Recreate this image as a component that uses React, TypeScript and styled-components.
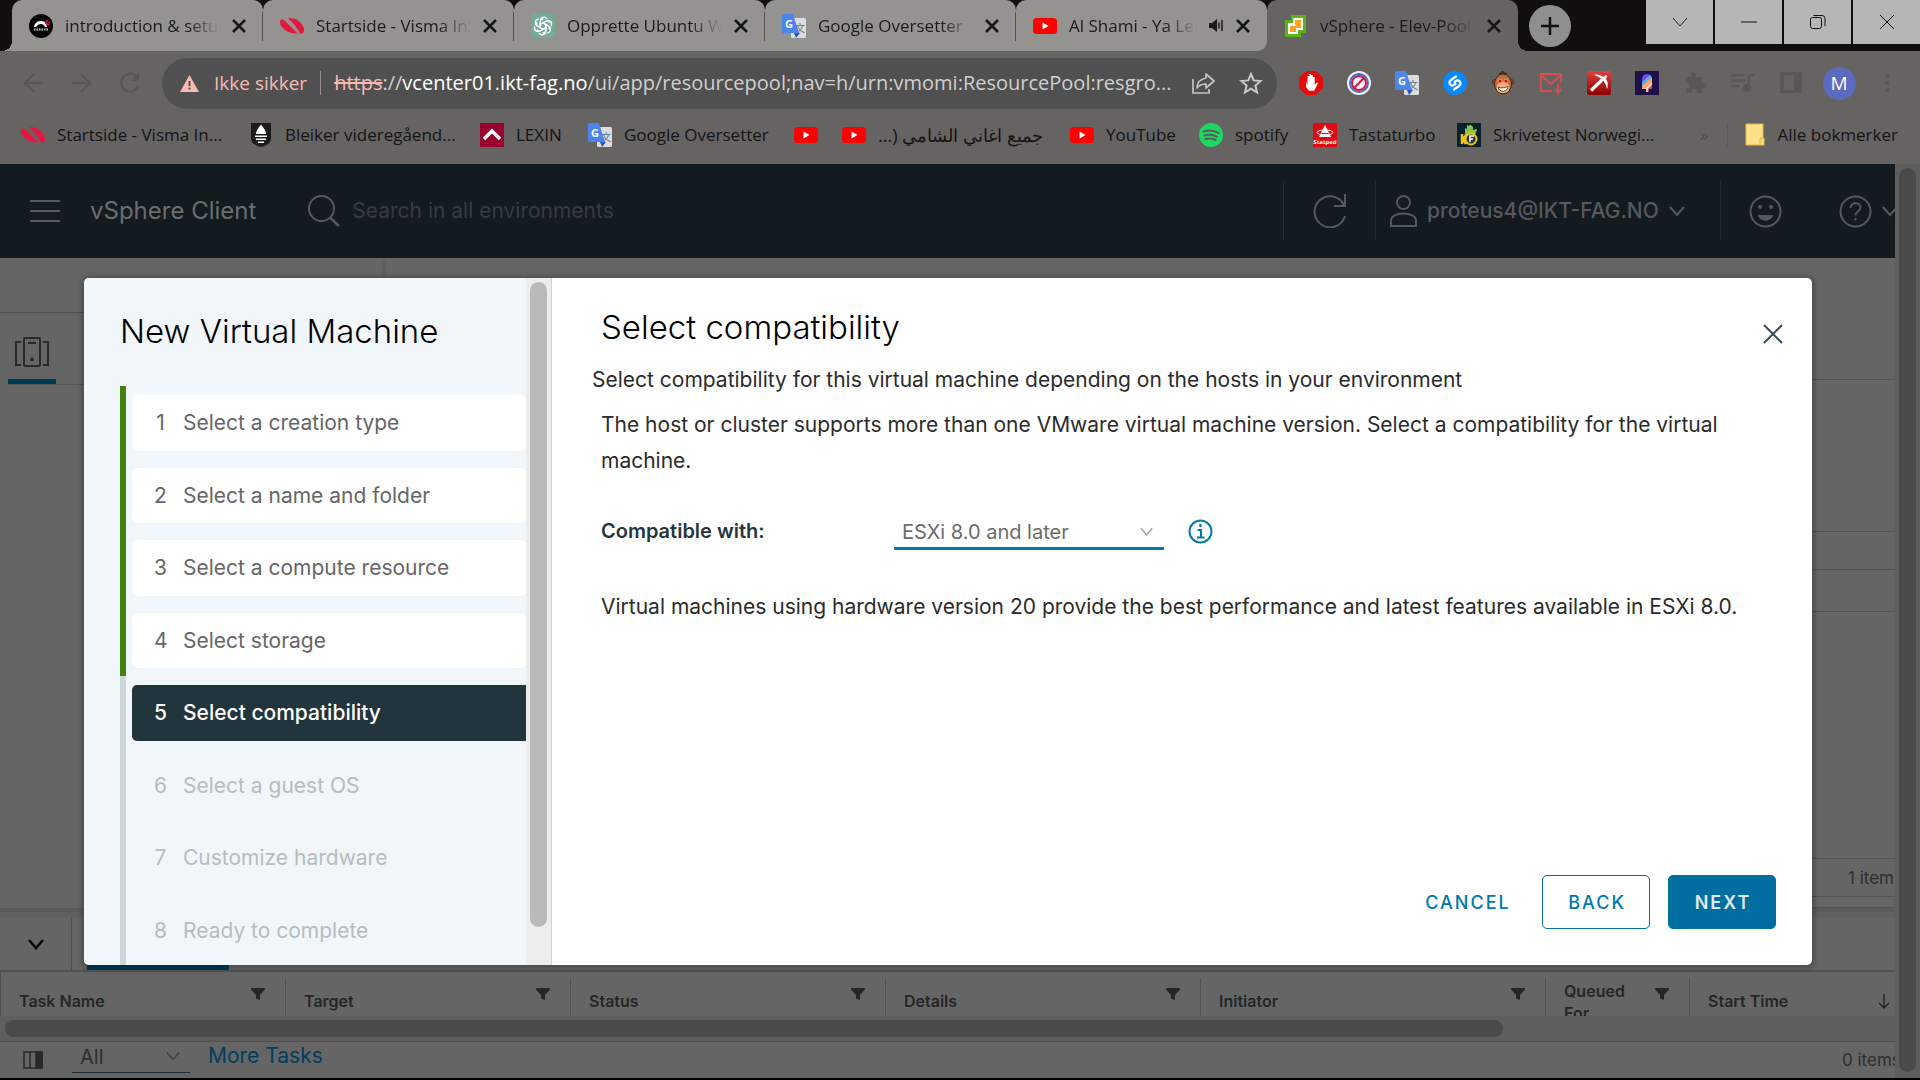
import React from "react";
import styled, { createGlobalStyle, css } from "styled-components";

const ui = '"Open Sans", "Noto Sans", sans-serif';
const city = 'Inter, "Noto Sans", sans-serif';

const Global = createGlobalStyle`
  *, *::before, *::after { box-sizing: border-box; }
  html, body { margin: 0; background: #000; }
  button, select, input { font: inherit; color: inherit; margin: 0; }
  button { padding: 0; border: 0; background: none; cursor: pointer; }
  a { color: inherit; text-decoration: none; }
  svg { display: block; flex: none; }
`;

const Page = styled.div`
  display: flex;
  flex-direction: column;
  min-height: 100vh;
  overflow: hidden;
  border-bottom: 2px solid #000;
  background: #656565;
  font-family: ${city};
`;

/* ---------- browser chrome ---------- */

const TabStrip = styled.header`
  display: flex;
  height: 51px;
  padding-left: 12px;
  background: #100f0c;
  font: 400 17px/24px ${ui};
`;

const Tab = styled.div<{ $active?: boolean; $first?: boolean; $divided?: boolean }>`
  position: relative;
  display: flex;
  align-items: center;
  gap: 12px;
  flex: 0 1 251px;
  min-width: 0;
  padding: 0 17px;
  border-radius: 10px 10px 0 0;
  background: ${(p) => (p.$active ? "#666363" : "#949390")};
  color: #1b1b1b;

  ${(p) =>
    p.$divided &&
    css`
      &::after {
        content: "";
        position: absolute;
        right: 0;
        top: 12px;
        width: 1px;
        height: 29px;
        background: #52514f;
      }
    `}

  ${(p) =>
    (p.$active || p.$first) &&
    css`
      &::before {
        content: "";
        position: absolute;
        left: -10px;
        bottom: 0;
        width: 10px;
        height: 10px;
        background: radial-gradient(circle at 0 0, transparent 10px, ${p.$active ? "#666363" : "#949390"} 10px);
      }
    `}

  ${(p) =>
    p.$active &&
    css`
      &::after {
        content: "";
        position: absolute;
        right: -10px;
        bottom: 0;
        width: 10px;
        height: 10px;
        background: radial-gradient(circle at 100% 0, transparent 10px, #666363 10px);
      }
    `}
`;

const TabTitle = styled.span`
  flex: 1;
  min-width: 0;
  overflow: hidden;
  white-space: nowrap;
  mask-image: linear-gradient(to right, #000 calc(100% - 32px), transparent);
`;

const TabClose = styled.button`
  display: grid;
  place-items: center;
  width: 14px;
  height: 24px;
`;

const NewTab = styled.button`
  align-self: center;
  display: grid;
  place-items: center;
  width: 42px;
  height: 42px;
  margin-left: 11px;
  border-radius: 50%;
  background: #8f8f8c;
`;

const WindowControls = styled.div`
  display: flex;
  gap: 2px;
  height: 44px;
  margin-left: auto;
`;

const WindowButton = styled.button`
  display: grid;
  place-items: center;
  width: 67px;
  background: #b6b6b6;
`;

const Toolbar = styled.div`
  display: flex;
  align-items: center;
  height: 64px;
  padding: 0 9px 0 22px;
  background: #666363;
  font: 400 19px/24px ${ui};
`;

const NavButtons = styled.div`
  display: flex;
  gap: 24px;
  width: 140px;
`;

const AddressBar = styled.div`
  flex: 1;
  display: flex;
  align-items: center;
  min-width: 0;
  height: 51px;
  padding: 0 14px 0 18px;
  border-radius: 26px;
  background: #505050;
  color: #cfcfcf;
`;

const Insecure = styled.span`
  padding: 0 13px 0 15px;
  color: #f6bab2;
  white-space: nowrap;
`;

const AddressRule = styled.span`
  width: 1px;
  height: 24px;
  margin-right: 13px;
  background: #9a8f8d;
`;

const Address = styled.span`
  flex: 1;
  min-width: 0;
  overflow: hidden;
  text-overflow: ellipsis;
  white-space: nowrap;
  font-size: 20px;
  line-height: 28px;

  s { color: #f6bab2; }
  b { font-weight: 400; color: #fff; }
`;

const AddressActions = styled.div`
  display: flex;
  gap: 24px;
  padding-left: 12px;
`;

const Extensions = styled.div`
  display: flex;
  align-items: center;
  padding-left: 10px;
`;

const Extension = styled.button`
  display: grid;
  place-items: center;
  width: 48px;
  height: 40px;
`;

const Avatar = styled.span`
  display: grid;
  place-items: center;
  width: 33px;
  height: 33px;
  border-radius: 50%;
  background: #5c6bc0;
  color: #fff;
  font: 400 19px/24px ${ui};
`;

const BookmarkBar = styled.nav`
  display: flex;
  align-items: center;
  height: 49px;
  padding: 0 22px 9px 21px;
  background: #666363;
  color: #141414;
  font: 400 17px/24px ${ui};
`;

const Bookmark = styled.a<{ $width: number }>`
  display: flex;
  align-items: center;
  gap: 12px;
  flex: 0 0 ${(p) => p.$width}px;
  min-width: 0;
  padding-right: 20px;
  white-space: nowrap;

  [dir="rtl"] { font-size: 18px; }
`;

const More = styled.button`
  color: #4b4949;
`;

const AllBookmarks = styled.a`
  display: flex;
  align-items: center;
  gap: 12px;
  margin-left: auto;
  padding-left: 17px;
  border-left: 1px solid #5a5757;
  white-space: nowrap;
`;

/* ---------- vSphere page ---------- */

const Viewport = styled.div`
  flex: 1;
  display: flex;
  min-height: 0;
`;

const ClientArea = styled.div`
  flex: 1;
  display: flex;
  flex-direction: column;
  min-width: 0;
`;

const ScrollTrack = styled.div`
  display: flex;
  width: 25px;
  padding: 4px;
  background: #5e5e5e;
`;

const ScrollThumb = styled.div`
  flex: 1;
  margin-bottom: 2px;
  border-radius: 9px;
  background: #4a4a4a;
`;

const ClientHeader = styled.header`
  display: flex;
  align-items: center;
  height: 94px;
  padding-left: 30px;
  overflow: hidden;
  background: #131a20;
  color: #55595d;
`;

const Brand = styled.h1`
  margin: 0 52px 0 30px;
  color: #6a6e71;
  font: 400 24px/30px ${city};
  white-space: nowrap;
`;

const SearchBox = styled.label`
  flex: 1;
  display: flex;
  align-items: center;
  gap: 12px;
  min-width: 0;

  input {
    flex: 1;
    min-width: 0;
    padding: 0;
    border: 0;
    outline: 0;
    background: none;
    font: 400 21px/28px ${city};
  }
  input::placeholder { color: #363c41; opacity: 1; }
`;

const HeaderCell = styled.div<{ $width: number; $rule?: boolean }>`
  display: flex;
  align-items: center;
  flex: 0 0 ${(p) => p.$width}px;
  height: 60px;
  border-left: 1px solid ${(p) => (p.$rule ? "#24292e" : "transparent")};
  overflow: hidden;
  font: 500 21px/28px ${city};
  white-space: nowrap;
`;

const HeaderButton = styled.button<{ $pad: number }>`
  display: flex;
  align-items: center;
  gap: 10px;
  padding-left: ${(p) => p.$pad}px;
`;

const Workspace = styled.div`
  position: relative;
  flex: 1;
  display: flex;
  flex-direction: column;
`;

const Inventory = styled.div`
  flex: 1;
  display: flex;
`;

const TreePane = styled.aside`
  width: 386px;
  border-right: 4px solid #5e5e5e;
`;

const TreeHead = styled.div`
  height: 55px;
  border-bottom: 1px solid #505050;
`;

const TreeTabs = styled.div`
  display: flex;
  height: 72px;
  margin-left: 8px;
  border-bottom: 1px solid #4f5558;
`;

const TreeTab = styled.button`
  display: grid;
  place-items: center;
  width: 48px;
  padding-top: 12px;
  border-bottom: 5px solid #003a54;
`;

const DetailPane = styled.section`
  flex: 1;
  display: flex;
  flex-direction: column;
`;

const Band = styled.div<{ $height?: number }>`
  display: flex;
  align-items: center;
  justify-content: flex-end;
  ${(p) => (p.$height ? `height: ${p.$height}px;` : "flex: 1;")}
  padding-right: 1px;
  border-bottom: 1px solid #505252;
  color: #2e2e2e;
  font-size: 17px;
`;

const Splitter = styled.div`
  height: 9px;
  border-top: 4px solid #5b5b5b;
  background: #606060;
`;

const TasksBar = styled.div`
  display: flex;
  height: 55px;
  border-bottom: 2px solid #4d5353;
`;

const Collapse = styled.button`
  display: grid;
  place-items: center;
  width: 72px;
  border-right: 1px solid #505050;
`;

const ActiveTask = styled.div`
  width: 142px;
  margin-left: 15px;
  border-bottom: 5px solid #003a54;
`;

const TableClip = styled.div`
  height: 44px;
  overflow: hidden;
  border-left: 1px solid #505050;
`;

const TaskTable = styled.table`
  width: 100%;
  border-collapse: collapse;
  table-layout: fixed;

  th { padding: 6px 0 0; vertical-align: top; text-align: left; }
`;

const HeadCell = styled.div<{ $wrap?: boolean; $last?: boolean }>`
  display: flex;
  align-items: ${(p) => (p.$wrap ? "flex-start" : "center")};
  justify-content: space-between;
  gap: 24px;
  height: 38px;
  padding: ${(p) => (p.$wrap ? "2px" : "8px")} ${(p) => (p.$last ? 4 : 20)}px 0 18px;
  border-right: 1px solid ${(p) => (p.$last ? "transparent" : "#525252")};
  color: #262626;
  font: 600 16px/${(p) => (p.$wrap ? 22 : 24)}px ${city};

  svg { align-self: ${(p) => (p.$last ? "center" : "flex-start")}; margin-top: ${(p) => (p.$wrap ? 8 : p.$last ? 0 : 2)}px; }
`;

const HScroll = styled.div`
  height: 26px;
  padding: 4px 5px;
  border-bottom: 1px solid #505050;
  background: #5e5e5e;
`;

const HThumb = styled.div`
  width: calc(100% - 387px);
  height: 17px;
  border-radius: 9px;
  background: #4a4a4a;
`;

const TasksFooter = styled.footer`
  display: flex;
  align-items: center;
  height: 36px;
  padding-left: 23px;
  overflow: hidden;
  color: #2e2e2e;
  font-size: 21px;
  line-height: 26px;
`;

const SelectWrap = styled.span<{ $width: number; $height: number; $line: string }>`
  display: grid;
  grid-template-columns: 1fr 24px;
  align-items: center;
  width: ${(p) => p.$width}px;
  height: ${(p) => p.$height}px;
  border-bottom: ${(p) => p.$line};
  font-size: 20px;

  select {
    grid-area: 1 / 1 / 2 / 3;
    width: 100%;
    padding: 2px 24px 0 8px;
    border: 0;
    outline: 0;
    appearance: none;
    background: none;
  }
  svg { grid-area: 1 / 2; pointer-events: none; }
`;

const MoreTasks = styled.a`
  flex: 1;
  margin: 0 0 8px 18px;
  color: #003f5c;
`;

const FooterSelect = styled.div`
  margin: 0 0 8px 29px;
`;

const Count = styled.span`
  width: 53px;
  font-size: 17px;
  white-space: nowrap;
`;

/* ---------- wizard ---------- */

const Overlay = styled.div`
  position: absolute;
  inset: 20px 83px 113px 84px;
  display: flex;
`;

const Wizard = styled.section`
  flex: 1;
  display: flex;
  min-width: 0;
  overflow: hidden;
  border-radius: 5px;
  background: #fff;
  box-shadow: 0 1px 4px 3px rgba(0, 0, 0, 0.22);
`;

const Side = styled.div`
  display: flex;
  width: 468px;
  border-right: 1px solid #ccd4d8;
  background: #f0f6f9;
`;

const SideContent = styled.div`
  flex: 1;
  padding-left: 36px;
`;

const SideTitle = styled.h2`
  margin: 0;
  padding: 33px 0 35px;
  color: #000;
  font: 300 33px/40px ${city};
`;

const SideScroll = styled.div`
  width: 25px;
  padding: 4px;
  background: #ededed;
`;

const SideThumb = styled.div`
  height: 95%;
  border-radius: 9px;
  background: #bababa;
`;

const Steps = styled.ol`
  display: grid;
  grid-template-rows: repeat(8, 1fr);
  height: 580px;
  margin: 0;
  padding: 0;
  list-style: none;
`;

type StepState = "done" | "current" | "todo";

const Step = styled.li<{ $state: StepState }>`
  display: flex;
  padding: 9px 0 8px 6px;
  border-left: 6px solid ${(p) => (p.$state === "done" ? "#42810e" : "#ccd6db")};
`;

const StepButton = styled.button<{ $state: StepState }>`
  display: flex;
  align-items: center;
  gap: 16px;
  flex: 1;
  padding: 1px 0 0 22px;
  border-radius: ${(p) => (p.$state === "current" ? "5px 0 0 5px" : "5px")};
  background: ${(p) => ({ done: "#fff", current: "#22343c", todo: "transparent" })[p.$state]};
  color: ${(p) => ({ done: "#666", current: "#fff", todo: "#b5bdc1" })[p.$state]};
  font: ${(p) => (p.$state === "current" ? 500 : 400)} 21px/28px ${city};
  text-align: left;
`;

const StepNumber = styled.span`
  width: 13px;
  text-align: center;
`;

const Main = styled.div`
  flex: 1;
  display: flex;
  flex-direction: column;
  padding: 29px 36px 36px 49px;
  color: #2b2b2b;
  font: 400 21px/36px ${city};
`;

const MainHead = styled.div`
  display: flex;
  justify-content: space-between;
  height: 55px;
`;

const MainTitle = styled.h2`
  margin: 0;
  color: #000;
  font: 300 33px/40px ${city};
`;

const CloseButton = styled.button`
  display: grid;
  place-items: center;
  width: 24px;
  height: 24px;
  margin: 15px -9px 0 0;
`;

const Lead = styled.p`
  margin: 0 0 9px -9px;
`;

const Para = styled.p`
  margin: 0;
`;

const FormRow = styled.div`
  display: flex;
  align-items: center;
  height: 72px;
  margin: 16px 0 22px;
  color: #6b6b6b;

  label {
    flex: 0 0 293px;
    color: #25363f;
    font-size: 20px;
    font-weight: 600;
  }
`;

const InfoButton = styled.button`
  margin-left: 24px;
`;

const Actions = styled.div`
  display: flex;
  gap: 18px;
  justify-content: flex-end;
  margin-top: auto;
`;

const Action = styled.button<{ $kind: "plain" | "outline" | "solid" }>`
  width: ${(p) => (p.$kind === "plain" ? 114 : 108)}px;
  height: 54px;
  padding: 2px 0 0 2px;
  border: ${(p) => (p.$kind === "plain" ? "0" : "1px solid #0070a0")};
  border-radius: 5px;
  background: ${(p) => (p.$kind === "solid" ? "#006f9f" : "transparent")};
  color: ${(p) => (p.$kind === "solid" ? "#e1e8ec" : "#0079ad")};
  font: ${(p) => (p.$kind === "solid" ? 600 : 500)} 18px/24px ${city};
  letter-spacing: 2px;
`;

/* ---------- drawings ---------- */

const Cross = ({ s, w, c }: { s: number; w: number; c: string }) => (
  <svg width={s} height={s} viewBox={`0 0 ${s} ${s}`} stroke={c} strokeWidth={w} fill="none">
    <path d={`M1 1L${s - 1} ${s - 1}M${s - 1} 1L1 ${s - 1}`} />
  </svg>
);

const Chevron = ({ s = 16, w = 2, c = "currentColor" }: { s?: number; w?: number; c?: string }) => (
  <svg width={s} height={s} viewBox="0 0 16 16" stroke={c} strokeWidth={w} fill="none">
    <path d="M1 4l7 8 7-8" />
  </svg>
);

const Visma = () => (
  <svg width="24" height="24" viewBox="0 0 24 24" fill="#e4173e">
    <path d="M0 8c0-3 3-3 5-1 4 4 8 8 13 12.500C9 20.500 0 14 0 8z" />
    <path d="M8 4.500c8-1.500 14 4 16 10 .7 3-1 5-4 5C17 14 13 8 8 4.500z" />
  </svg>
);

const NetNinja = () => (
  <svg width="24" height="24" viewBox="0 0 24 24">
    <circle cx="12" cy="12" r="12" fill="#060606" />
    <path d="M5 13c1-5 4-6 7-6 4 0 6 3 6 6h-2c-1-2-2-3-4-3s-4 1-5 3z" fill="#fff" />
    <path d="M16 9l3-3M17 11l4-1M16 10l5-2" stroke="#e21f3b" strokeWidth="1.200" />
    <path d="M5 15.500h14" stroke="#ccc" strokeDasharray="1.500 1" strokeWidth="2" />
  </svg>
);

const Gpt = () => (
  <svg width="24" height="24" viewBox="0 0 24 24">
    <rect width="24" height="24" rx="4" fill="#74aa9c" />
    <g fill="none" stroke="#fff" strokeWidth="1.300">
      {[0, 60, 120, 180, 240, 300].map((a) => (
        <path key={a} transform={`rotate(${a} 12 12)`} d="M9.300 13.500V6.800a3.600 3.600 0 0 1 6.600-2M9.300 10.300l4.600-2.700a3.600 3.600 0 0 1 4.500 1" />
      ))}
    </g>
  </svg>
);

const Translate = () => (
  <svg width="24" height="24" viewBox="0 0 24 24">
    <rect x="9" y="4" width="15" height="20" rx="1.500" fill="#dcdcdc" />
    <text x="18" y="18" fontSize="10" textAnchor="middle" fill="#56757f" fontFamily="Noto Sans CJK SC">文</text>
    <path d="M12 19h6l-4 5z" fill="#2b54c0" />
    <path d="M1.500 0H11l6 19H1.500A1.500 1.500 0 0 1 0 17.500v-16A1.500 1.500 0 0 1 1.500 0z" fill="#4b86ee" />
    <text x="7" y="13.500" fontSize="11" fontWeight="700" textAnchor="middle" fill="#fff" fontFamily="Open Sans">G</text>
  </svg>
);

const YouTube = () => (
  <svg width="24" height="24" viewBox="0 0 24 24">
    <rect y="4" width="24" height="16" rx="3.500" fill="#f00" />
    <path d="M9.500 8.500v7l6-3.500z" fill="#fff" />
  </svg>
);

const VSphere = () => (
  <svg width="24" height="24" viewBox="0 0 24 24">
    <path d="M7 1h15v18h-5v4H1V6h6z" fill="#5bb317" />
    <path d="M9 4h10v12h-5v4H4V9h5z" fill="#fff" />
    <path d="M11 6h6v8h-5v-3h-1z" fill="#f7a823" />
    <path d="M6 12h6v6H6z" fill="#f7a823" />
  </svg>
);

const Speaker = () => (
  <svg width="15" height="15" viewBox="0 0 15 15" fill="#1a1a1a">
    <path d="M0 5h3l5-4v13l-5-4H0z" />
    <path d="M10 4.500v6M13 2v11" stroke="#1a1a1a" strokeWidth="1.500" />
  </svg>
);

const Bleiker = () => (
  <svg width="24" height="24" viewBox="0 0 24 24">
    <path d="M2 0h20v16c0 4-5 7-10 8C7 23 2 20 2 16z" fill="#1c1c1c" />
    <path d="M12 1.500c3 4 5 6 5 9.500H7c0-3.500 2-5.500 5-9.500zM6 12.500h12v1.500H6zM7 15.500h10V17H7zM9 18.500h6V20H9z" fill="#fff" />
  </svg>
);

const Lexin = () => (
  <svg width="24" height="24" viewBox="0 0 24 24">
    <path fill="#99002e" d="M0 0h24v24H0z" />
    <path d="M4 16l8-8 8 8" stroke="#fff" strokeWidth="3.500" fill="none" />
  </svg>
);

const Spotify = () => (
  <svg width="24" height="24" viewBox="0 0 24 24">
    <circle cx="12" cy="12" r="12" fill="#1ed760" />
    <path d="M4.500 8.500c5-1.500 11-1 15 1.500M5.500 12.500c4-1.200 9-.8 12.500 1.300M6.500 16c3.500-1 7-.6 10 1" stroke="#5b5b5b" strokeWidth="2" strokeLinecap="round" fill="none" />
  </svg>
);

const Statped = () => (
  <svg width="24" height="24" viewBox="0 0 24 24">
    <rect width="24" height="24" rx="1" fill="#e30613" />
    <path d="M12 2l3 6 3 6H6l3-6z" fill="#fff" />
    <ellipse cx="12" cy="9.500" rx="8" ry="2.500" fill="none" stroke="#fff" />
    <path d="M8.500 10.500h7" stroke="#e30613" />
    <text x="12" y="21" fontSize="6" fontWeight="700" textAnchor="middle" fill="#fff" fontFamily="Open Sans">Statped</text>
  </svg>
);

const TenFast = () => (
  <svg width="24" height="24" viewBox="0 0 24 24">
    <path fill="#08222e" d="M0 0h24v24H0z" />
    <path d="M8 12V5l2 1V2l2 1 1-1.500L15 3l1 1v3l3-1 1 1-2 5z" fill="#8bc34a" />
    <path d="M5 11v10M9 12l-3 4 3 5" stroke="#f2c21a" strokeWidth="2.500" fill="none" />
    <circle cx="14" cy="16" r="5.500" fill="#2b3a3f" stroke="#f2c21a" strokeWidth="2" />
    <path d="M13 19v-6h4M13 16h3" stroke="#fff" strokeWidth="1.500" fill="none" />
  </svg>
);

const Folder = () => (
  <svg width="20" height="24" viewBox="0 0 20 24">
    <path d="M1 1h17v14h1v7H1z" fill="#ffe08a" stroke="#e2bb48" />
    <path d="M15 21v-6h4" fill="#f6d36a" stroke="#e2bb48" />
  </svg>
);

const Arrow = ({ flip }: { flip?: boolean }) => (
  <svg width="24" height="24" viewBox="0 0 24 24" stroke="#595656" strokeWidth="2.200" fill="none">
    <path d={flip ? "M2 12h17M11 3l9 9-9 9" : "M21 12H4M12 3l-9 9 9 9"} />
  </svg>
);

const Reload = () => (
  <svg width="24" height="24" viewBox="0 0 24 24" stroke="#595656" strokeWidth="2.300" fill="none">
    <path d="M19.500 6.500A9 9 0 1 0 20.500 15" />
    <path d="M21 2v8h-8z" fill="#595656" stroke="none" />
  </svg>
);

const Warning = () => (
  <svg width="19" height="17" viewBox="0 0 19 17">
    <path d="M9.500 0L19 17H0z" fill="#f6bab2" />
    <path d="M9.500 6v5M9.500 12.500v2" stroke="#505050" strokeWidth="2" />
  </svg>
);

const Share = () => (
  <svg width="24" height="24" viewBox="0 0 24 24" stroke="#c4c4c4" strokeWidth="1.700" fill="none">
    <path d="M2 8v14h16v-4" />
    <path d="M15 3l8 7-8 7v-4c-4 0-7 1-9 4 0-6 4-9 9-10z" strokeLinejoin="round" />
  </svg>
);

const Star = () => (
  <svg width="24" height="24" viewBox="0 0 24 24" stroke="#c9c9c9" strokeWidth="2" fill="none">
    <path d="M12 3l2.700 6.400 6.900.6-5.200 4.500 1.600 6.800-6-3.600-6 3.600 1.600-6.800L2.400 10l6.900-.6z" />
  </svg>
);

const extensionIcons: [string, React.ReactNode][] = [
  ["AdBlock", <><path d="M7 0h10l7 7v10l-7 7H7l-7-7V7z" fill="#e60b0b" /><path d="M7 10l1.500 5V5h1.800v6V3h1.800v8V4h1.800v8V6h1.800v8l2-2.500c1 0 1.300.6 1 1.200l-3.500 7H10L7 16z" fill="#fff" /></>],
  ["Blocker", <><circle cx="12" cy="12" r="12" fill="#f3f3f8" /><circle cx="12" cy="12" r="9" fill="none" stroke="#3f6fd0" strokeWidth="2" /><circle cx="12" cy="12" r="7" fill="none" stroke="#d01c45" strokeWidth="2" /><path d="M7 17L17 7" stroke="#d01c45" strokeWidth="2.200" /></>],
  ["Translate", <Translate />],
  ["Shazam", <><circle cx="12" cy="12" r="12" fill="#0788ff" /><path d="M13 5.500L8 9c-3 2.500-1 6 2 5.500l2.500-1.500M11 18.500l5-3.500c3-2.500 1-6-2-5.500l-2.500 1.500" stroke="#fff" strokeWidth="2.300" fill="none" strokeLinecap="round" /></>],
  ["Monkey", <><circle cx="4" cy="11" r="2.500" fill="#a2562a" stroke="#4a2511" /><circle cx="20" cy="11" r="2.500" fill="#a2562a" stroke="#4a2511" /><ellipse cx="12" cy="13" rx="8.500" ry="10" fill="#b9703f" stroke="#4a2511" /><ellipse cx="12" cy="16.500" rx="6.500" ry="5.500" fill="#eeb27a" /><circle cx="9" cy="10" r="2.500" fill="#e69a6a" /><circle cx="15" cy="10" r="2.500" fill="#e69a6a" /><circle cx="9" cy="10" r="1.500" fill="#d11" /><circle cx="15" cy="10" r="1.500" fill="#d11" /><path d="M7 16c3 1.500 7 1 10-.5 0 6-9 6.500-10 .5z" fill="#fff" stroke="#5b2c11" strokeWidth=".8" /><path d="M8 3l3-1V0l2 2 3 1" stroke="#4a2511" strokeWidth="1.500" fill="none" /></>],
  ["Mail", <path d="M13 20H2V3h20v9M2 4l10 9L22 4M19 13v9M16 18.500l3 3.500 3-3.500" stroke="#d5504e" strokeWidth="1.800" fill="none" />],
  ["Pickaxe", <><defs><linearGradient id="pick" x1="0" y1="0" x2="0" y2="1"><stop offset="0" stopColor="#e0403f" /><stop offset="1" stopColor="#8c0000" /></linearGradient></defs><rect width="24" height="24" rx="2" fill="url(#pick)" /><path d="M7 4c3-1 7 0 9 2l3-2 1 1-1 3c2 3 2.500 6 1 10-1-4-2-7-5-9.500C13 6.500 10 5 7 4z" fill="#fff" /><path d="M16 8L4 19.500" stroke="#fff" strokeWidth="3.200" /></>],
  ["Popsicle", <><path fill="#1d1147" d="M0 0h24v24H0z" /><path d="M11 18h2.500v3H11z" fill="#f0c48e" /><clipPath id="pop"><path d="M7 18V8a5 5 0 0 1 10 0v10z" /></clipPath><g clipPath="url(#pop)"><path fill="#7a3df0" d="M6 2h12v17H6z" /><path d="M6 12L18 1v4L6 16z" fill="#4fb0e8" /><path d="M6 16L18 5v5L8 19H6z" fill="#f9a66a" /><path d="M8 19l10-9v3l-6 6z" fill="#fbe0a8" /><path d="M12 19l6-6v6z" fill="#f2456e" /></g></>],
  ["Extensions", <path d="M3 6h5V4a2.500 2.500 0 0 1 5 0v2h6v6h2a2.500 2.500 0 0 1 0 5h-2v5h-5v-2a2.500 2.500 0 0 0-5 0v2H3v-5h1a2.500 2.500 0 0 0 0-5H3z" fill="#585656" />],
  ["Media", <><path d="M0 4h14M0 9.500h14M0 15h9M18 18V4h5" stroke="#585656" strokeWidth="2.500" fill="none" /><circle cx="16" cy="17" r="4" fill="#585656" /></>],
  ["Side panel", <path d="M1 1h22v21H1zm4 3v15h10V4z" fill="#585656" fillRule="evenodd" />],
];

const Funnel = () => (
  <svg width="14" height="12" viewBox="0 0 14 12" fill="#262626">
    <path d="M0 0h14v1.500L9 7v5l-4-1.500V7L0 1.500z" />
  </svg>
);

/* ---------- data ---------- */

const tabs = [
  { icon: <NetNinja />, title: "introduction & setup" },
  { icon: <Visma />, title: "Startside - Visma InSchool" },
  { icon: <Gpt />, title: "Opprette Ubuntu Web" },
  { icon: <Translate />, title: "Google Oversetter" },
  { icon: <YouTube />, title: "Al Shami - Ya Leil", sound: true },
  { icon: <VSphere />, title: "vSphere - Elev-Pool", active: true },
];

const bookmarks = [
  { icon: <Visma />, label: "Startside - Visma In...", width: 228 },
  { icon: <Bleiker />, label: "Bleiker videregåend...", width: 231 },
  { icon: <Lexin />, label: "LEXIN", width: 108 },
  { icon: <Translate />, label: "Google Oversetter", width: 206 },
  { icon: <YouTube />, label: "", width: 48 },
  { icon: <YouTube />, label: "جميع اغاني الشامي (...", width: 228, rtl: true },
  { icon: <YouTube />, label: "YouTube", width: 129 },
  { icon: <Spotify />, label: "spotify", width: 114 },
  { icon: <Statped />, label: "Tastaturbo", width: 144 },
  { icon: <TenFast />, label: "Skrivetest Norwegi...", width: 243 },
];

const steps: { label: string; state: StepState }[] = [
  { label: "Select a creation type", state: "done" },
  { label: "Select a name and folder", state: "done" },
  { label: "Select a compute resource", state: "done" },
  { label: "Select storage", state: "done" },
  { label: "Select compatibility", state: "current" },
  { label: "Select a guest OS", state: "todo" },
  { label: "Customize hardware", state: "todo" },
  { label: "Ready to complete", state: "todo" },
];

const columns = [
  { label: "Task Name", width: 285 },
  { label: "Target", width: 285 },
  { label: "Status", width: 315 },
  { label: "Details", width: 315 },
  { label: "Initiator", width: 345 },
  { label: "Queued For", width: 144, wrap: true },
  { label: "Start Time", last: true },
];

export default function App() {
  return (
    <Page>
      <Global />
      <TabStrip>
        {tabs.map((t, i) => (
          <Tab key={t.title} $active={t.active} $first={i === 0} $divided={i < 4}>
            {t.icon}
            <TabTitle>{t.title}</TabTitle>
            {t.sound && <Speaker />}
            <TabClose aria-label="Close tab"><Cross s={14} w={2.5} c="#161616" /></TabClose>
          </Tab>
        ))}
        <NewTab aria-label="New tab">
          <svg width="18" height="18" viewBox="0 0 18 18" stroke="#111" strokeWidth="2.500"><path d="M9 0v18M0 9h18" /></svg>
        </NewTab>
        <WindowControls>
          <WindowButton aria-label="Search tabs"><Chevron w={1} c="#222" /></WindowButton>
          <WindowButton aria-label="Minimize"><svg width="16" height="2"><path d="M0 1h16" stroke="#111" /></svg></WindowButton>
          <WindowButton aria-label="Restore">
            <svg width="16" height="16" viewBox="0 0 16 16" fill="none" stroke="#111"><rect x=".5" y="3.500" width="11" height="11" rx="2" /><path d="M3.500 1.500H12a3 3 0 0 1 3 3V12" /></svg>
          </WindowButton>
          <WindowButton aria-label="Close"><Cross s={16} w={1} c="#111" /></WindowButton>
        </WindowControls>
      </TabStrip>

      <Toolbar>
        <NavButtons>
          <button aria-label="Back"><Arrow /></button>
          <button aria-label="Forward"><Arrow flip /></button>
          <button aria-label="Reload"><Reload /></button>
        </NavButtons>
        <AddressBar>
          <Warning />
          <Insecure>Ikke sikker</Insecure>
          <AddressRule />
          <Address><s>https</s>://<b>vcenter01.ikt-fag.no</b>/ui/app/resourcepool;nav=h/urn:vmomi:ResourcePool:resgro...</Address>
          <AddressActions>
            <button aria-label="Share"><Share /></button>
            <button aria-label="Bookmark"><Star /></button>
          </AddressActions>
        </AddressBar>
        <Extensions>
          {extensionIcons.map(([name, art]) => (
            <Extension key={name} aria-label={name}>
              <svg width="24" height="24" viewBox="0 0 24 24">{art}</svg>
            </Extension>
          ))}
          <Extension aria-label="Profile"><Avatar>M</Avatar></Extension>
          <Extension aria-label="Menu">
            <svg width="6" height="20" viewBox="0 0 6 20" fill="#585656"><circle cx="3" cy="3" r="2.200" /><circle cx="3" cy="10" r="2.200" /><circle cx="3" cy="17" r="2.200" /></svg>
          </Extension>
        </Extensions>
      </Toolbar>

      <BookmarkBar>
        {bookmarks.map((b, i) => (
          <Bookmark key={i} href="#" $width={b.width} aria-label={b.label || "YouTube"}>
            {b.icon}
            {b.label && <span dir={b.rtl ? "rtl" : undefined}>{b.label}</span>}
          </Bookmark>
        ))}
        <More>»</More>
        <AllBookmarks href="#"><Folder />Alle bokmerker</AllBookmarks>
      </BookmarkBar>

      <Viewport>
        <ClientArea>
          <ClientHeader>
            <button aria-label="Menu">
              <svg width="30" height="22" viewBox="0 0 30 22" stroke="#55595d" strokeWidth="2"><path d="M0 1h30M0 11h30M0 21h30" /></svg>
            </button>
            <Brand>vSphere Client</Brand>
            <SearchBox>
              <svg width="32" height="32" viewBox="0 0 32 32" fill="none" stroke="#55595d" strokeWidth="2"><circle cx="13.500" cy="13.500" r="12.500" /><path d="M22 22.500l9 8.500" strokeWidth="2.500" /></svg>
              <input placeholder="Search in all environments" aria-label="Search in all environments" />
            </SearchBox>
            <HeaderCell $width={92} $rule>
              <HeaderButton $pad={29} aria-label="Refresh">
                <svg width="34" height="34" viewBox="0 0 34 34" fill="none" stroke="currentColor" strokeWidth="2"><path d="M31 11A15.500 15.500 0 1 0 32 22M32 0v12H21" /></svg>
              </HeaderButton>
            </HeaderCell>
            <HeaderCell $width={345} $rule>
              <HeaderButton $pad={14}>
                <svg width="27" height="32" viewBox="0 0 27 32" fill="none" stroke="currentColor" strokeWidth="2"><circle cx="13.500" cy="7.500" r="6.500" /><path d="M1 31v-5c0-5 6-7.500 12.500-7.500S26 21 26 26v5z" /></svg>
                proteus4@IKT-FAG.NO
                <Chevron />
              </HeaderButton>
            </HeaderCell>
            <HeaderCell $width={90} $rule>
              <HeaderButton $pad={28} aria-label="Feedback">
                <svg width="33" height="33" viewBox="0 0 33 33" fill="none" stroke="currentColor" strokeWidth="2"><circle cx="16.500" cy="16.500" r="15" /><path d="M9 20h15c-1 7.500-14 7.500-15 0z" fill="currentColor" stroke="none" /><circle cx="11" cy="12" r="1" /><circle cx="22" cy="12" r="1" /></svg>
              </HeaderButton>
            </HeaderCell>
            <HeaderCell $width={85}>
              <HeaderButton $pad={28} aria-label="Help">
                <svg width="33" height="33" viewBox="0 0 33 33" fill="none" stroke="currentColor" strokeWidth="2"><circle cx="16.500" cy="16.500" r="15" /><path d="M11.500 13c0-6.500 10-6 10-.5 0 4-5 3.500-5 8M16.500 23v2.500" /></svg>
                <Chevron />
              </HeaderButton>
            </HeaderCell>
          </ClientHeader>

          <Workspace>
            <Inventory>
              <TreePane>
                <TreeHead />
                <TreeTabs>
                  <TreeTab aria-label="Hosts and clusters">
                    <svg width="34" height="30" viewBox="0 0 34 30" fill="none" stroke="#2a2a2a" strokeWidth="2"><rect x="9" y="1" width="16" height="28" rx="1" /><path d="M13 6h8M6 5H1v23h5M28 5h5v23h-5" /><circle cx="17" cy="22.500" r="2" fill="#2a2a2a" stroke="none" /></svg>
                  </TreeTab>
                </TreeTabs>
              </TreePane>
              <DetailPane>
                <Band $height={122} />
                <Band $height={152} />
                <Band $height={38} />
                <Band $height={42} />
                <Band />
                <Band $height={38}>1 item</Band>
                <Band $height={11} />
              </DetailPane>
            </Inventory>
            <Splitter />
            <TasksBar>
              <Collapse aria-label="Collapse"><Chevron w={2.5} c="#050505" /></Collapse>
              <ActiveTask />
            </TasksBar>
            <TableClip>
              <TaskTable>
                <colgroup>
                  {columns.map((c) => <col key={c.label} width={c.width} />)}
                </colgroup>
                <thead>
                  <tr>
                    {columns.map((c) => (
                      <th key={c.label} scope="col">
                        <HeadCell $wrap={c.wrap} $last={c.last}>
                          {c.label}
                          {c.last ? (
                            <svg width="12" height="15" viewBox="0 0 12 15" fill="none" stroke="#262626" strokeWidth="1.500"><path d="M6 0v14M1 9l5 5 5-5" /></svg>
                          ) : <Funnel />}
                        </HeadCell>
                      </th>
                    ))}
                  </tr>
                </thead>
              </TaskTable>
            </TableClip>
            <HScroll><HThumb /></HScroll>
            <TasksFooter>
              <button aria-label="Manage columns">
                <svg width="20" height="18" viewBox="0 0 20 18" fill="none" stroke="#282828" strokeWidth="1.500"><rect x="1" y="1" width="18" height="16" /><path d="M7 1v16" /><path d="M13 1h6v16h-6z" fill="#282828" /></svg>
              </button>
              <FooterSelect>
                <SelectWrap $width={118} $height={33} $line="1px solid #1d3139">
                  <select aria-label="Task filter" defaultValue="All"><option>All</option></select>
                  <Chevron s={14} w={1.5} c="#3d3d3d" />
                </SelectWrap>
              </FooterSelect>
              <MoreTasks href="#">More Tasks</MoreTasks>
              <Count>0 items</Count>
            </TasksFooter>

            <Overlay>
              <Wizard role="dialog" aria-label="New Virtual Machine">
                <Side>
                  <SideContent>
                    <SideTitle>New Virtual Machine</SideTitle>
                    <Steps>
                      {steps.map((s, i) => (
                        <Step key={s.label} $state={s.state}>
                          <StepButton $state={s.state}>
                            <StepNumber>{i + 1}</StepNumber>
                            {s.label}
                          </StepButton>
                        </Step>
                      ))}
                    </Steps>
                  </SideContent>
                  <SideScroll><SideThumb /></SideScroll>
                </Side>
                <Main>
                  <MainHead>
                    <MainTitle>Select compatibility</MainTitle>
                    <CloseButton aria-label="Close"><Cross s={20} w={2} c="#3a4d57" /></CloseButton>
                  </MainHead>
                  <Lead>Select compatibility for this virtual machine depending on the hosts in your environment</Lead>
                  <Para>The host or cluster supports more than one VMware virtual machine version. Select a compatibility for the virtual machine.</Para>
                  <FormRow>
                    <label htmlFor="compat">Compatible with:</label>
                    <SelectWrap $width={270} $height={38} $line="3px solid #0079ad">
                      <select id="compat" defaultValue="ESXi 8.0 and later"><option>ESXi 8.0 and later</option></select>
                      <Chevron s={13} w={1.5} c="#9a9a9a" />
                    </SelectWrap>
                    <InfoButton aria-label="Information">
                      <svg width="25" height="25" viewBox="0 0 25 25" fill="none" stroke="#0079ad" strokeWidth="2"><circle cx="12.500" cy="12.500" r="11" /><path d="M9.500 11h3.500v7.500M9 18.500h7.500" /><circle cx="12.500" cy="6.500" r="1.500" fill="#0079ad" stroke="none" /></svg>
                    </InfoButton>
                  </FormRow>
                  <Para>Virtual machines using hardware version 20 provide the best performance and latest features available in ESXi 8.0.</Para>
                  <Actions>
                    <Action $kind="plain">CANCEL</Action>
                    <Action $kind="outline">BACK</Action>
                    <Action $kind="solid">NEXT</Action>
                  </Actions>
                </Main>
              </Wizard>
            </Overlay>
          </Workspace>
        </ClientArea>
        <ScrollTrack><ScrollThumb /></ScrollTrack>
      </Viewport>
    </Page>
  );
}
